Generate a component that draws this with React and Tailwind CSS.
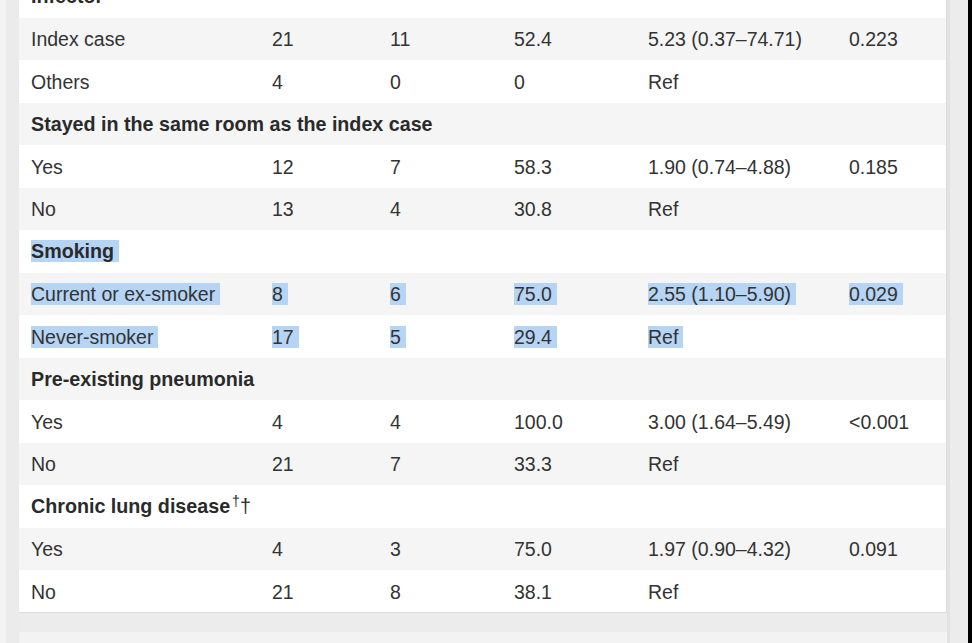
import React from "react";

const rows = [
  { head: "Infector" },
  { cells: ["Index case", "21", "11", "52.4", "5.23 (0.37–74.71)", "0.223"] },
  { cells: ["Others", "4", "0", "0", "Ref", ""] },
  { head: "Stayed in the same room as the index case" },
  { cells: ["Yes", "12", "7", "58.3", "1.90 (0.74–4.88)", "0.185"] },
  { cells: ["No", "13", "4", "30.8", "Ref", ""] },
  { head: "Smoking", selected: true },
  { cells: ["Current or ex-smoker", "8", "6", "75.0", "2.55 (1.10–5.90)", "0.029"], selected: true },
  { cells: ["Never-smoker", "17", "5", "29.4", "Ref", ""], selected: true },
  { head: "Pre-existing pneumonia" },
  { cells: ["Yes", "4", "4", "100.0", "3.00 (1.64–5.49)", "<0.001"] },
  { cells: ["No", "21", "7", "33.3", "Ref", ""] },
  { head: "Chronic lung disease", dagger: true },
  { cells: ["Yes", "4", "3", "75.0", "1.97 (0.90–4.32)", "0.091"] },
  { cells: ["No", "21", "8", "38.1", "Ref", ""] },
];

const colWidths = ["w-[241px]", "w-[118px]", "w-[124px]", "w-[134px]", "w-[201px]", "flex-1"];

const Sel = ({ on, children }) =>
  on ? <span className="bg-[#b6d4f4] pr-[5px]">{children}</span> : <span>{children}</span>;

export default function App() {
  return (
    <div
      className="w-[972px] h-[643px] overflow-hidden bg-[#ececec] flex text-[19.5px] text-[#333]"
      style={{ fontFamily: '"Liberation Sans", Arial, sans-serif' }}
    >
      <div className="w-[19px] bg-[#ebebeb] border-l-[6px] border-[#f3f3f3]" />
      <div className="flex flex-col w-[928px]">
        <div className="h-[613px] bg-white border-r border-b border-[#dcdcdc] overflow-hidden">
          <div className="-mt-[25px]">
            {rows.map((r, i) => (
              <div
                key={i}
                className={`h-[42.5px] flex items-center pl-3 pt-[2px] ${i % 2 === 1 ? "bg-[#f5f5f5]" : "bg-white"}`}
              >
                {r.head ? (
                  <div className="font-bold text-[19.7px] text-[#2a2a2a]">
                    <Sel on={r.selected}>{r.head}</Sel>
                    {r.dagger && (
                      <>
                        <sup className="font-normal text-[14px] ml-[2px]">†</sup>
                        <span className="font-normal">†</span>
                      </>
                    )}
                  </div>
                ) : (
                  r.cells.map((c, j) => (
                    <div key={j} className={colWidths[j]}>
                      {c && <Sel on={r.selected}>{c}</Sel>}
                    </div>
                  ))
                )}
              </div>
            ))}
          </div>
        </div>
        <div className="flex-1" />
        <div className="h-[11px] bg-[#f3f3f3]" />
      </div>
      <div className="flex-1 bg-[#ececec] border-l-[3px] border-[#e2e2e2]" />
      <div className="w-[4px] bg-black" />
    </div>
  );
}
